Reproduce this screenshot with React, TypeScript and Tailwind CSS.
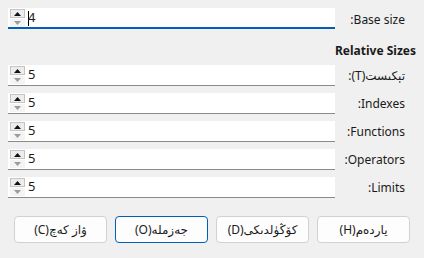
import React from 'react';

const rows = ['تېكىست(T):', 'Indexes:', 'Functions:', 'Operators:', 'Limits:'];

const Spinner: React.FC = () => (
  <div className="ml-[2px] flex flex-col w-[15px] shrink-0">
    <div className="h-[9px] mt-px border border-[#c4c4c4] bg-[#ededed] flex items-center justify-center">
      <svg width="7" height="4" viewBox="0 0 7 4"><path d="M0 4 L3.5 0 L7 4 Z" fill="#111" /></svg>
    </div>
    <div className="h-[8px] mt-px bg-[#f4f4f4] flex items-center justify-center">
      <svg width="7" height="4" viewBox="0 0 7 4"><path d="M0 0 L7 0 L3.5 4 Z" fill="#9c9c9c" /></svg>
    </div>
  </div>
);

const Field: React.FC<{ value: string; focused?: boolean }> = ({ value, focused }) => (
  <div
    dir="ltr"
    className={`flex-1 ml-2 h-[21px] bg-white flex items-start ${focused ? 'border-b-2 border-[#005fb8]' : 'border-b border-[#8b8b8b]'}`}
  >
    <Spinner />
    <div className="ml-[3px] flex items-center h-[20px] text-[13px] text-[#1a1a1a]">
      {focused && <span className="w-px h-[15px] bg-black -mr-px" />}
      <span>{value}</span>
    </div>
  </div>
);

const Button: React.FC<{ label: string; primary?: boolean }> = ({ label, primary }) => (
  <button
    className={`w-[93px] h-[27px] rounded-[4px] bg-[#fdfdfd] text-[12px] text-[#1a1a1a] ${primary ? 'border border-[#005fb8]' : 'border border-[#d1d1d1]'}`}
  >
    {label}
  </button>
);

export default function App() {
  return (
    <div
      dir="rtl"
      className="w-[424px] h-[258px] bg-[#f0f0f0] pt-2 text-[12px] text-[#1a1a1a]"
      style={{ fontFamily: '"Segoe UI", "Noto Sans", "DejaVu Sans", sans-serif' }}
    >
      {/* Base size */}
      <div className="flex items-center h-[21px]">
        <div className="w-[89px] shrink-0 pr-[19px] pt-[2px]">Base size:</div>
        <Field value="4" focused />
      </div>

      {/* Relative sizes */}
      <div className="mt-[14px] h-[16px] pr-2 font-bold leading-[16px]">Relative Sizes</div>

      <div className="mt-[6px] flex flex-col gap-[7px]">
        {rows.map((label) => (
          <div key={label} className="flex items-center h-[21px]">
            <div className="w-[89px] shrink-0 pr-[19px] pt-px">{label}</div>
            <Field value="5" />
          </div>
        ))}
      </div>

      {/* Buttons */}
      <div className="mt-[18px] px-[14px] flex gap-2">
        <Button label="ياردەم(H)" />
        <Button label="كۆڭۈلدىكى(D)" />
        <Button label="جەزملە(O)" primary />
        <Button label="ۋاز كەچ(C)" />
      </div>
    </div>
  );
}
